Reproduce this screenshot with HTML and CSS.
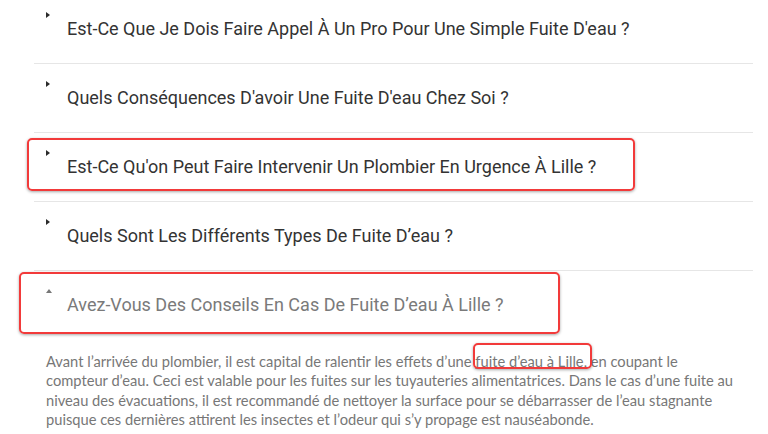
FILE: index.html
```html
<!DOCTYPE html>
<html lang="fr">
<head>
<meta charset="utf-8">
<link rel="stylesheet" href="styles.css">
</head>
<body>
<div class="faq">
  <div class="item">
    <div class="head"><span class="ico"><span class="tri-right"></span></span><span class="q">Est-Ce Que Je Dois Faire Appel À Un Pro Pour Une Simple Fuite D'eau ?</span></div>
  </div>
  <div class="item">
    <div class="head"><span class="ico"><span class="tri-right"></span></span><span class="q">Quels Conséquences D'avoir Une Fuite D'eau Chez Soi ?</span></div>
  </div>
  <div class="item">
    <div class="head"><span class="ico"><span class="tri-right"></span></span><span class="q">Est-Ce Qu'on Peut Faire Intervenir Un Plombier En Urgence À Lille ?</span></div>
  </div>
  <div class="item">
    <div class="head"><span class="ico"><span class="tri-right"></span></span><span class="q">Quels Sont Les Différents Types De Fuite D’eau ?</span></div>
  </div>
  <div class="item open">
    <div class="head"><span class="ico"><span class="tri-up"></span></span><span class="q">Avez-Vous Des Conseils En Cas De Fuite D’eau À Lille ?</span></div>
    <p class="answer">Avant l’arrivée du plombier, il est capital de ralentir les effets d’une <a class="lnk" href="#">fuite d’eau à Lille</a>, en coupant le compteur d’eau. Ceci est valable pour les fuites sur les tuyauteries alimentatrices. Dans le cas d’une fuite au niveau des évacuations, il est recommandé de nettoyer la surface pour se débarrasser de l’eau stagnante puisque ces dernières attirent les insectes et l’odeur qui s’y propage est nauséabonde.</p>
  </div>
</div>
<div class="mark mark-1"></div>
<div class="mark mark-2"></div>
<div class="mark mark-3"></div>
</body>
</html>
```
FILE: styles.css
```css
html, body {
  margin: 0;
  padding: 0;
  background: #ffffff;
  overflow: hidden;
}
body {
  width: 768px;
  height: 434px;
  position: relative;
}
.faq {
  margin: -5px 0 0 34px;
  width: 719px;
}
.item {
  border-bottom: 1px solid #e6e6e6;
}
.item.open {
  border-bottom: none;
}
.head {
  display: flex;
  align-items: flex-start;
  height: 68px;
  padding-left: 12px;
  box-sizing: border-box;
}
.ico {
  width: 21px;
  flex: none;
  padding-top: 17px;
  display: flex;
}
.tri-right {
  width: 0;
  height: 0;
  border-top: 3px solid transparent;
  border-bottom: 3px solid transparent;
  border-left: 4px solid #2b2b2b;
}
.tri-up {
  margin-top: 1px;
  width: 0;
  height: 0;
  border-left: 3.5px solid transparent;
  border-right: 3.5px solid transparent;
  border-bottom: 4px solid #777777;
}
.q {
  padding-top: 24px;
  font-family: Roboto, "Liberation Sans", sans-serif;
  font-size: 18px;
  line-height: 20px;
  color: #333333;
}
.open .q {
  color: #7a7a7a;
}
.answer {
  margin: 13px 0 0 0;
  padding: 0 10px 0 12px;
  font-family: Lato, "Open Sans", sans-serif;
  font-size: 14.7px;
  line-height: 19.4px;
  color: #777777;
}
.lnk {
  color: #777777;
  text-decoration: underline;
  text-decoration-color: #999999;
}
.mark {
  position: absolute;
  border: 2px solid #f23a3a;
  border-radius: 5px;
  box-shadow: 0 1px 3px rgba(0, 0, 0, 0.35);
  box-sizing: border-box;
}
.mark-1 { left: 27px; top: 138px; width: 608px; height: 53px; }
.mark-2 { left: 19px; top: 272px; width: 541px; height: 62px; }
.mark-3 { left: 473px; top: 343px; width: 119px; height: 26px; }
```
